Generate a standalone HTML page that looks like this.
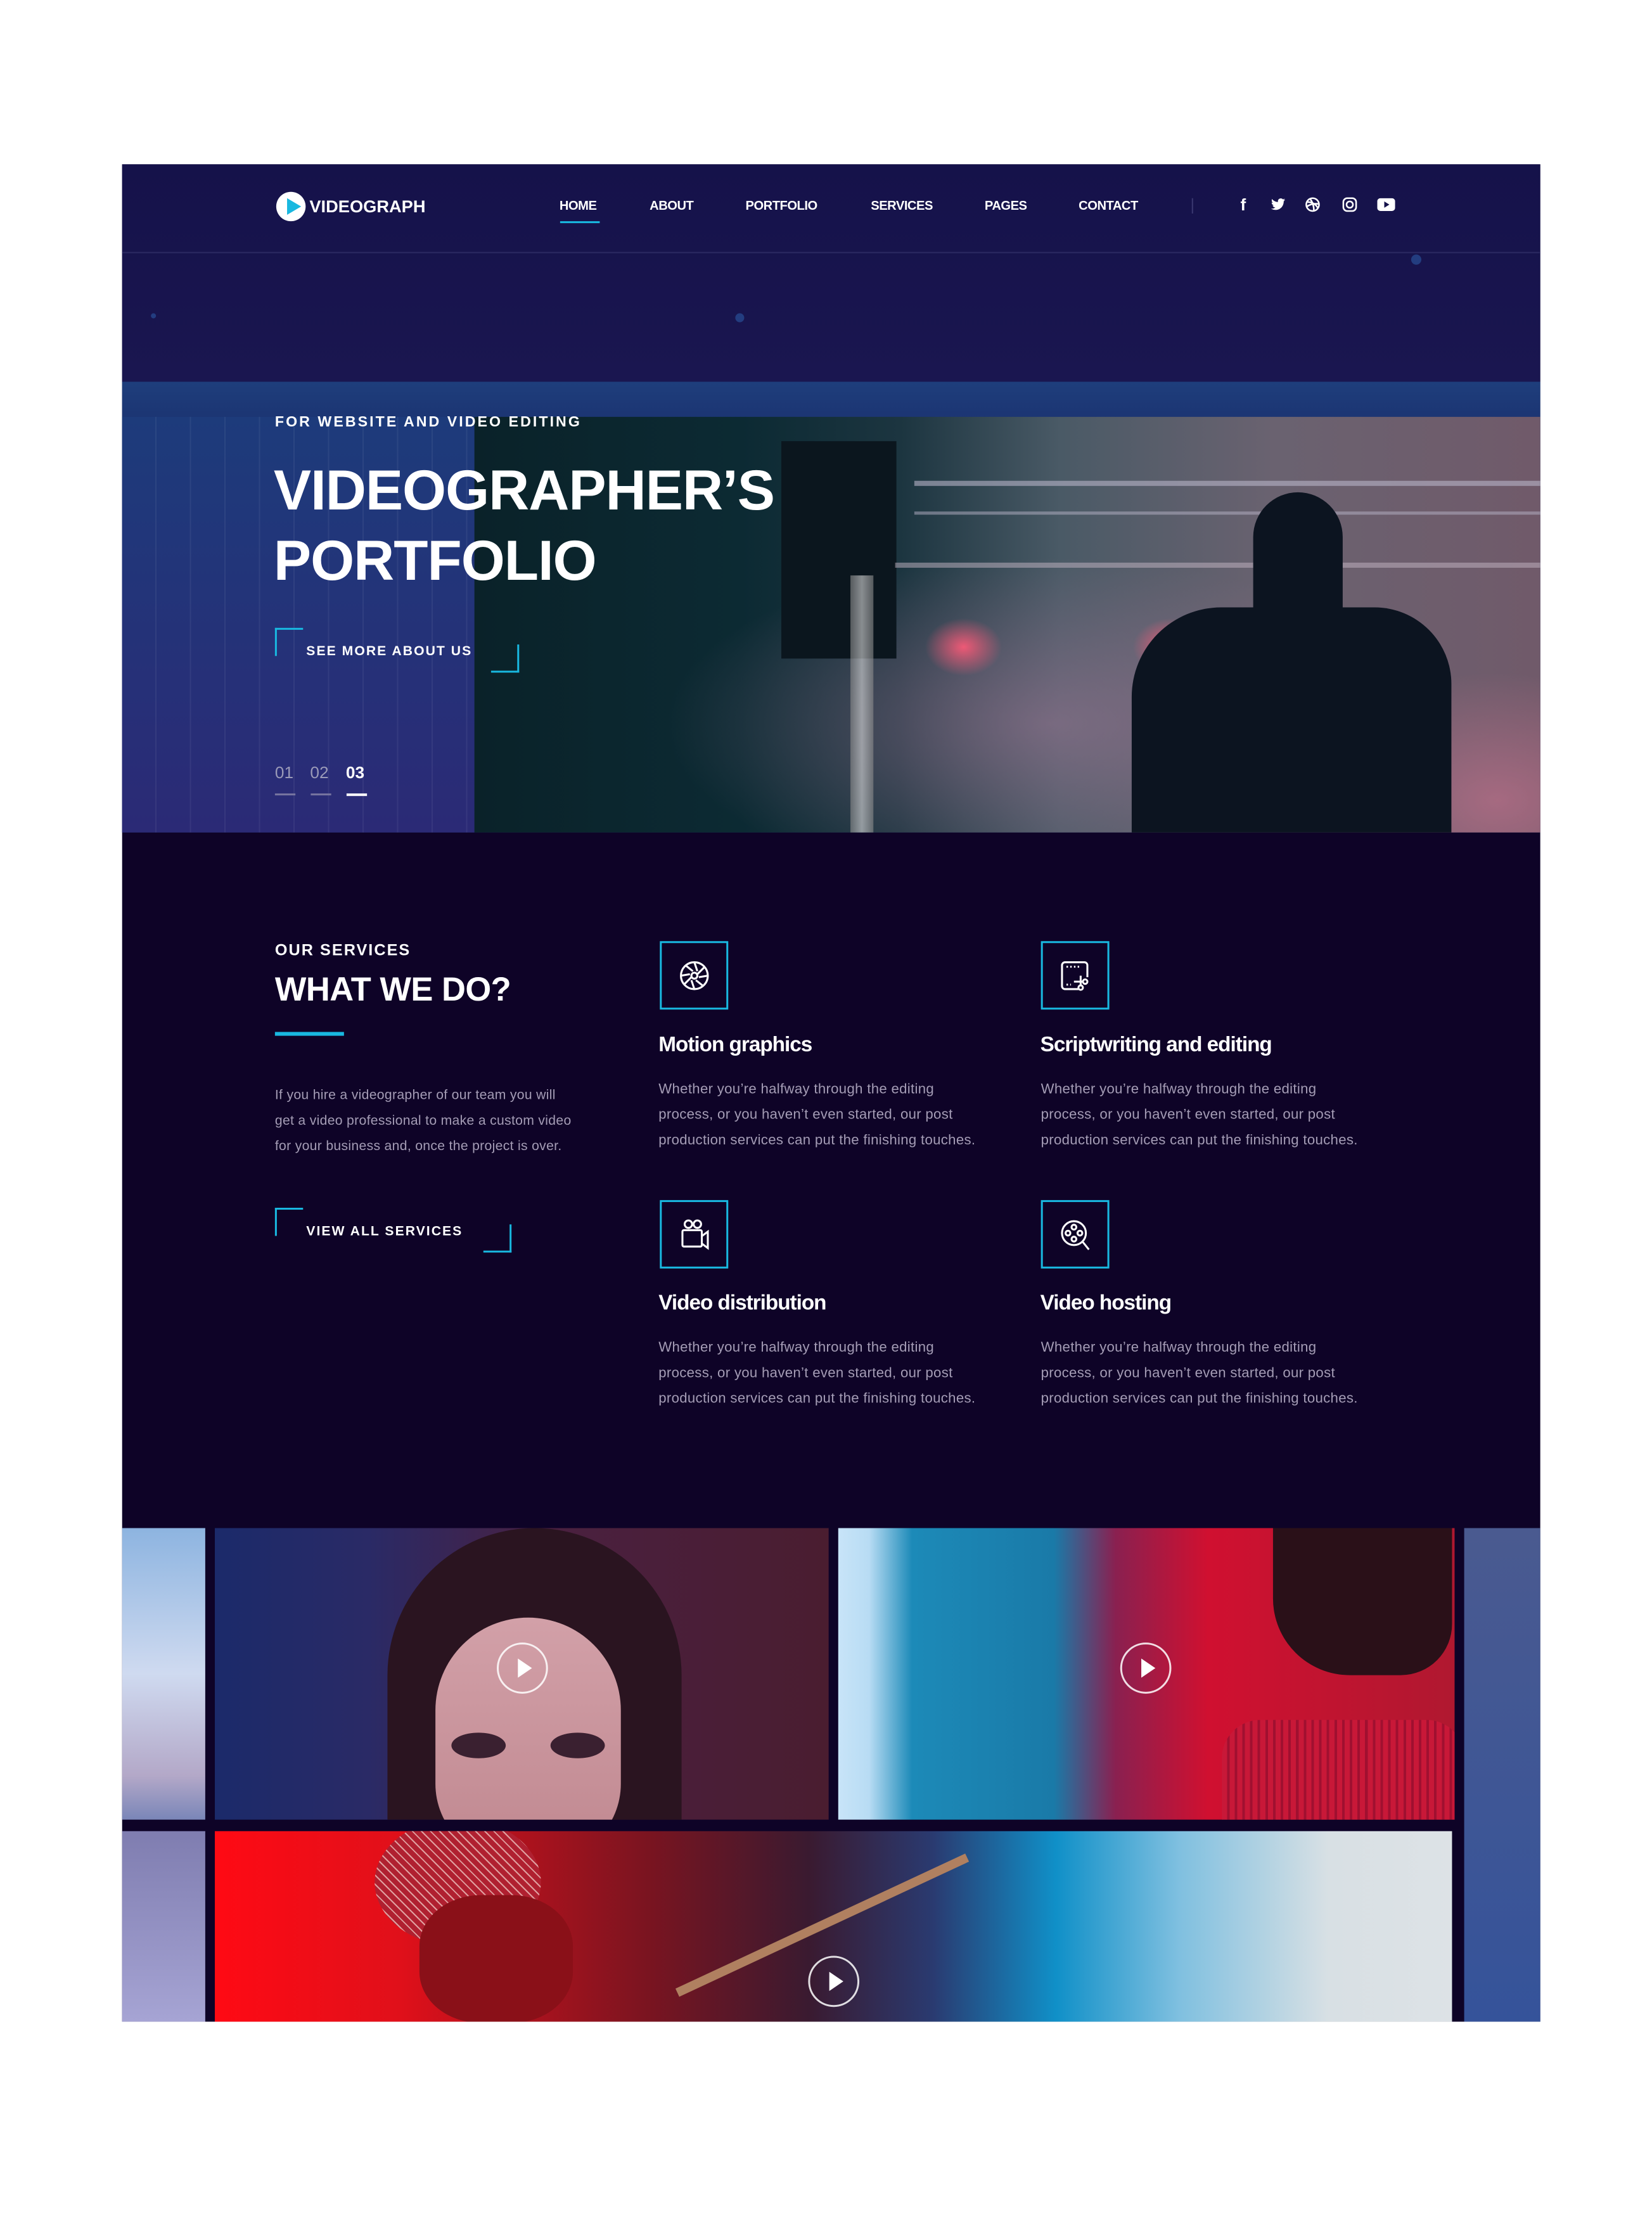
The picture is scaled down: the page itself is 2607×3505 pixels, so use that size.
<!DOCTYPE html>
<html><head><meta charset="utf-8"><style>
*{margin:0;padding:0;box-sizing:border-box}
body{width:2607px;height:3474px;background:#fff;position:relative;overflow:hidden;font-family:"Liberation Sans",sans-serif;color:#fff}
#w{position:absolute;left:0;top:0;width:2607px;height:3474px;transform:scale(1.009);transform-origin:0 0}
.a{position:absolute}
.nav{font-weight:bold;font-size:20px;top:311px;letter-spacing:-0.5px}
.br1{border-left:3px solid #19b8e0;border-top:3px solid #19b8e0;width:44px;height:44px}
.br2{border-right:3px solid #19b8e0;border-bottom:3px solid #19b8e0;width:44px;height:44px}
.box{width:107px;height:107px;border:3px solid #19b8e0}
.tt{font-weight:bold;font-size:33px;letter-spacing:-1px}
.ds{font-size:22px;line-height:40px;color:#a49cb5;white-space:nowrap;letter-spacing:0.3px}
.play{width:80px;height:80px;border:3px solid rgba(255,255,255,.85);border-radius:50%}
.play:after{content:"";position:absolute;left:30px;top:22px;border-left:22px solid #fff;border-top:15px solid transparent;border-bottom:15px solid transparent}
</style></head><body><div id="w">
<div class="a" style="left:191px;top:257px;width:2218px;height:2905px;background:#0e0327"></div>
<div class="a" style="left:191px;top:257px;width:2218px;height:340px;background:linear-gradient(180deg,#15124a,#1a1650)"></div>
<div class="a" style="left:191px;top:394px;width:2218px;height:2px;background:#2c2a62"></div>
<div class="a" style="left:1150px;top:490px;width:14px;height:14px;border-radius:50%;background:#233d80"></div>
<div class="a" style="left:2207px;top:398px;width:16px;height:16px;border-radius:50%;background:#233d80"></div>
<div class="a" style="left:236px;top:490px;width:8px;height:8px;border-radius:50%;background:#233d80"></div>
<div class="a" style="left:244px;top:645px;width:16px;height:16px;border-radius:50%;background:#5a3a60"></div>
<div class="a" style="left:432px;top:300px;width:46px;height:46px;border-radius:50%;background:#fff"></div>
<div class="a" style="left:449px;top:310px;border-left:22px solid #19b8e0;border-top:13px solid transparent;border-bottom:13px solid transparent"></div>
<div class="a" style="left:484px;top:308px;font-weight:bold;font-size:27px;letter-spacing:0">VIDEOGRAPH</div>
<div class="a nav" style="left:875px">HOME</div>
<div class="a" style="left:876px;top:346px;width:62px;height:3px;background:#19b8e0"></div>
<div class="a nav" style="left:1016px">ABOUT</div>
<div class="a nav" style="left:1166px">PORTFOLIO</div>
<div class="a nav" style="left:1362px">SERVICES</div>
<div class="a nav" style="left:1540px">PAGES</div>
<div class="a nav" style="left:1687px">CONTACT</div>
<div class="a" style="left:1864px;top:310px;width:2px;height:24px;background:#3a3870"></div>
<div class="a" style="left:1940px;top:305px;font-weight:bold;font-size:26px">f</div>
<svg class="a" style="left:1986px;top:308px" width="26" height="24" viewBox="0 0 24 24"><path fill="#fff" d="M23 4.5c-.8.4-1.7.6-2.6.7.9-.6 1.6-1.4 2-2.5-.9.5-1.9.9-2.9 1.1A4.5 4.5 0 0 0 11.8 8 12.8 12.8 0 0 1 2.5 3.3a4.5 4.5 0 0 0 1.4 6A4.5 4.5 0 0 1 1.8 8.8a4.5 4.5 0 0 0 3.6 4.4 4.5 4.5 0 0 1-2 .1 4.5 4.5 0 0 0 4.2 3.1A9 9 0 0 1 1 18.3 12.8 12.8 0 0 0 7.9 20.3c8.3 0 12.8-6.9 12.8-12.8v-.6c.9-.6 1.6-1.4 2.3-2.4z"/></svg>
<svg class="a" style="left:2041px;top:308px" width="24" height="24" viewBox="0 0 24 24" fill="none" stroke="#fff" stroke-width="2.5"><circle cx="12" cy="12" r="10"/><path d="M4 8c6 0 12 2 16 9M8 3c4 5 6 11 6 19M3 15c6-4 12-5 18-4"/></svg>
<svg class="a" style="left:2099px;top:308px" width="24" height="24" viewBox="0 0 24 24" fill="none" stroke="#fff" stroke-width="2.5"><rect x="2" y="2" width="20" height="20" rx="6"/><circle cx="12" cy="12" r="5"/></svg>
<svg class="a" style="left:2154px;top:310px" width="28" height="20" viewBox="0 0 28 20"><rect width="28" height="20" rx="5" fill="#fff"/><path d="M11 5l8 5-8 5z" fill="#15124a"/></svg>
<div class="a" style="left:191px;top:597px;width:2218px;height:705px;background:linear-gradient(180deg,#1e3e7c 0,#1c3573 8%,#1f2f6e 100%)"></div>
<div class="a" style="left:191px;top:652px;width:551px;height:650px;background-image:repeating-linear-gradient(90deg,transparent 0 52px,rgba(255,255,255,.06) 52px 54px),linear-gradient(180deg,#1d3b7b,#2b2a76)"></div>
<div class="a" style="left:742px;top:652px;width:1667px;height:650px;background:
radial-gradient(ellipse 60px 45px at 765px 360px,rgba(255,90,120,.9),transparent),
radial-gradient(ellipse 60px 45px at 1090px 360px,rgba(255,90,120,.9),transparent),
radial-gradient(ellipse 30px 40px at 1455px 360px,rgba(255,80,110,.8),transparent),
radial-gradient(ellipse 600px 260px at 900px 480px,rgba(160,120,150,.55),transparent),
radial-gradient(ellipse 300px 200px at 1600px 600px,rgba(220,120,150,.5),transparent),
linear-gradient(90deg,#0a2229 0,#0c2a33 25%,#1c3540 40%,#4a5a66 55%,#6a6270 75%,#705a6a 100%)"></div>
<div class="a" style="left:1222px;top:690px;width:180px;height:340px;background:#0b161e"></div>
<div class="a" style="left:1430px;top:752px;width:979px;height:8px;background:#b8b4c8;opacity:.6"></div>
<div class="a" style="left:1430px;top:800px;width:979px;height:5px;background:#b8b4c8;opacity:.5"></div>
<div class="a" style="left:1400px;top:880px;width:1009px;height:8px;background:#c4b6c4;opacity:.5"></div>
<div class="a" style="left:1960px;top:770px;width:140px;height:230px;border-radius:70px 70px 10px 10px;background:#0c1420"></div>
<div class="a" style="left:1770px;top:950px;width:500px;height:352px;border-radius:140px 120px 0 0;background:#0c1420"></div>
<div class="a" style="left:1330px;top:900px;width:36px;height:402px;background:linear-gradient(90deg,#888,#ddd,#888);opacity:.6"></div>
<div class="a" style="left:430px;top:646px;font-weight:bold;font-size:23px;letter-spacing:3px">FOR WEBSITE AND VIDEO EDITING</div>
<div class="a" style="left:428px;top:712px;font-weight:bold;font-size:88px;line-height:110px;letter-spacing:-1px">VIDEOGRAPHER’S<br>PORTFOLIO</div>
<div class="a br1" style="left:430px;top:982px"></div>
<div class="a" style="left:479px;top:1007px;font-weight:bold;font-size:21px;letter-spacing:2px">SEE MORE ABOUT US</div>
<div class="a br2" style="left:768px;top:1008px"></div>
<div class="a" style="left:430px;top:1193px;font-size:26px;color:#9a9ab8">01</div>
<div class="a" style="left:485px;top:1193px;font-size:26px;color:#9a9ab8">02</div>
<div class="a" style="left:541px;top:1193px;font-size:26px;font-weight:bold">03</div>
<div class="a" style="left:430px;top:1241px;width:32px;height:3px;background:#7775a0"></div>
<div class="a" style="left:486px;top:1241px;width:32px;height:3px;background:#7775a0"></div>
<div class="a" style="left:542px;top:1241px;width:32px;height:4px;background:#fff"></div>
<div class="a" style="left:430px;top:1472px;font-weight:bold;font-size:25px;letter-spacing:2px">OUR SERVICES</div>
<div class="a" style="left:430px;top:1518px;font-weight:bold;font-size:52px;letter-spacing:-0.5px">WHAT WE DO?</div>
<div class="a" style="left:430px;top:1614px;width:108px;height:6px;background:#19b8e0"></div>
<div class="a ds" style="left:430px;top:1693px;font-size:21px">If you hire a videographer of our team you will<br>get a video professional to make a custom video<br>for your business and, once the project is over.</div>
<div class="a br1" style="left:430px;top:1889px"></div>
<div class="a" style="left:479px;top:1914px;font-weight:bold;font-size:21px;letter-spacing:2px">VIEW ALL SERVICES</div>
<div class="a br2" style="left:756px;top:1915px"></div>
<div class="a box" style="left:1032px;top:1472px"></div>
<svg class="a" style="left:1058px;top:1498px" width="56" height="56" viewBox="0 0 24 24" fill="none" stroke="#fff" stroke-width="1.3"><circle cx="12" cy="12" r="9"/><circle cx="12" cy="12" r="2"/><path d="M12 3l2 6M21 12l-6 1M12 21l-2-6M3 12l6-1M6 5l5 4M18 19l-5-4M19 6l-5 5M5 18l5-5"/></svg>
<div class="a tt" style="left:1030px;top:1614px">Motion graphics</div>
<div class="a ds" style="left:1030px;top:1683px">Whether you’re halfway through the editing<br>process, or you haven’t even started, our post<br>production services can put the finishing touches.</div>
<div class="a box" style="left:1628px;top:1472px"></div>
<svg class="a" style="left:1654px;top:1498px" width="56" height="56" viewBox="0 0 24 24" fill="none" stroke="#fff" stroke-width="1.3"><path d="M14 21H5a2 2 0 0 1-2-2V5a2 2 0 0 1 2-2h13a2 2 0 0 1 2 2v8"/><path d="M6 6h10" stroke-dasharray="1 1.5"/><path d="M6 18h3" stroke-dasharray="1 1.5"/><circle cx="18.5" cy="16" r="1.5"/><circle cx="15.5" cy="20" r="1.5"/><path d="M15.5 18.5V12M11 16h6"/></svg>
<div class="a tt" style="left:1627px;top:1614px">Scriptwriting and editing</div>
<div class="a ds" style="left:1628px;top:1683px">Whether you’re halfway through the editing<br>process, or you haven’t even started, our post<br>production services can put the finishing touches.</div>
<div class="a box" style="left:1032px;top:1877px"></div>
<svg class="a" style="left:1058px;top:1903px" width="56" height="56" viewBox="0 0 24 24" fill="none" stroke="#fff" stroke-width="1.3"><circle cx="8" cy="5" r="2.5"/><circle cx="14" cy="5" r="2.5"/><rect x="4" y="9" width="13" height="11" rx="1"/><path d="M17 13l4-3v11l-4-3"/></svg>
<div class="a tt" style="left:1030px;top:2018px">Video distribution</div>
<div class="a ds" style="left:1030px;top:2087px">Whether you’re halfway through the editing<br>process, or you haven’t even started, our post<br>production services can put the finishing touches.</div>
<div class="a box" style="left:1628px;top:1877px"></div>
<svg class="a" style="left:1654px;top:1903px" width="56" height="56" viewBox="0 0 24 24" fill="none" stroke="#fff" stroke-width="1.3"><circle cx="11" cy="11" r="8"/><circle cx="11" cy="7" r="1.6"/><circle cx="11" cy="15" r="1.6"/><circle cx="7" cy="11" r="1.6"/><circle cx="15" cy="11" r="1.6"/><path d="M17 17l4 5"/></svg>
<div class="a tt" style="left:1627px;top:2018px">Video hosting</div>
<div class="a ds" style="left:1628px;top:2087px">Whether you’re halfway through the editing<br>process, or you haven’t even started, our post<br>production services can put the finishing touches.</div>
<div class="a" style="left:191px;top:2390px;width:130px;height:456px;background:linear-gradient(180deg,#8db4e0,#cfdaf0 50%,#b3a8c8 85%,#7a86b8)"></div>
<div class="a" style="left:191px;top:2864px;width:130px;height:298px;background:linear-gradient(180deg,#7f7db0,#a6a4d4)"></div>
<div class="a" style="left:2290px;top:2390px;width:119px;height:772px;background:linear-gradient(180deg,#4a5a90,#35539a)"></div>
<div class="a" style="left:336px;top:2390px;width:960px;height:456px;background:linear-gradient(90deg,#1b2a6a 0,#2a2a66 25%,#4a2040 55%,#4a1d30 100%);overflow:hidden">
 <div class="a" style="left:270px;top:0;width:460px;height:520px;border-radius:230px 230px 0 0;background:#2a1420"></div>
 <div class="a" style="left:345px;top:140px;width:290px;height:380px;border-radius:145px 145px 120px 120px;background:linear-gradient(180deg,#d2a0a8,#c08890)"></div>
 <div class="a" style="left:370px;top:320px;width:85px;height:40px;border-radius:50%;background:#3a2030"></div>
 <div class="a" style="left:525px;top:320px;width:85px;height:40px;border-radius:50%;background:#3a2030"></div>
</div>
<div class="a" style="left:1311px;top:2390px;width:964px;height:456px;background:linear-gradient(90deg,#c8e4f8 0,#b8dcf4 5%,#1c8ab8 12%,#1a7aa8 35%,#8a2050 45%,#d01030 60%,#b01830 100%);overflow:hidden">
 <div class="a" style="left:680px;top:0;width:280px;height:230px;border-radius:0 0 80px 120px;background:#2a1018"></div>
 <div class="a" style="left:600px;top:300px;width:380px;height:160px;border-radius:60px 60px 0 0;background:repeating-linear-gradient(90deg,#c81838 0 8px,#a01030 8px 12px)"></div>
</div>
<div class="a" style="left:336px;top:2864px;width:1935px;height:298px;background:linear-gradient(90deg,#ff0a14 0,#e0101a 15%,#7a1420 35%,#3a1a30 48%,#2a3a70 58%,#1090c8 68%,#80c0e0 78%,#d8e0e4 90%,#dde2e6 100%);overflow:hidden">
 <div class="a" style="left:250px;top:-20px;width:260px;height:200px;border-radius:50%;background:repeating-linear-gradient(45deg,#b02030 0 8px,#e0a0a0 8px 10px)"></div>
 <div class="a" style="left:320px;top:100px;width:240px;height:200px;border-radius:40%;background:#8a1018"></div>
 <div class="a" style="left:700px;top:140px;width:500px;height:14px;background:#b08060;transform:rotate(-25deg)"></div>
</div>
<div class="a play" style="left:777px;top:2569px"></div>
<div class="a play" style="left:1752px;top:2569px"></div>
<div class="a play" style="left:1264px;top:3059px"></div>
</div></body></html>
